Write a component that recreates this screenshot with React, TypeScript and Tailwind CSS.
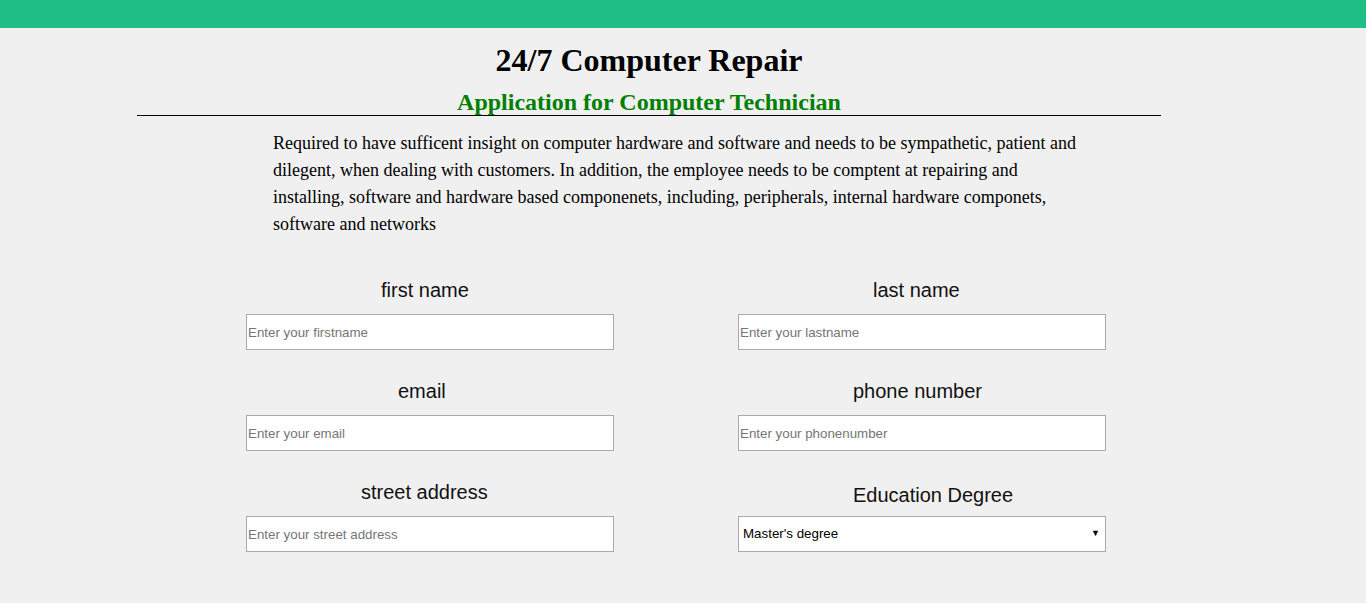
const FIELDS = [
    { label: "first name", placeholder: "Enter your firstname", pad: "pl-[135px]" },
    { label: "last name", placeholder: "Enter your lastname", pad: "pl-[135px]" },
    { label: "email", placeholder: "Enter your email", pad: "pl-[152px]" },
    { label: "phone number", placeholder: "Enter your phonenumber", pad: "pl-[115px]" },
    { label: "street address", placeholder: "Enter your street address", pad: "pl-[115px]" },
]

const SANS = { fontFamily: '"Liberation Sans", Arial, sans-serif' }

export default function App() {
    return (
        <div
            className="min-h-[603px] w-full bg-[#f0f0f0] text-black"
            style={{ fontFamily: '"Liberation Serif", "Times New Roman", serif' }}
        >
            {/* Top bar */}
            <div className="h-[28px] w-full bg-[#1ebe85]" />

            {/* Heading block */}
            <div className="ml-[137px] w-[1024px]">
                <h1 className="mt-[14px] text-center text-[32px] font-bold leading-[37px]">
                    24/7 Computer Repair
                </h1>
                <h2 className="mt-[10px] border-b border-black text-center text-[24px] font-bold leading-[26px] text-[#008000]">
                    Application for Computer Technician
                </h2>
            </div>

            <p className="ml-[273px] mt-[14px] w-[820px] text-[18px] leading-[27px]">
                Required to have sufficent insight on computer hardware and software and needs to be sympathetic, patient and
                dilegent, when dealing with customers. In addition, the employee needs to be comptent at repairing and
                installing, software and hardware based componenets, including, peripherals, internal hardware componets,
                software and networks
            </p>

            {/* Form */}
            <form className="ml-[246px] mt-[41px] grid w-[860px] grid-cols-[368px_368px] gap-x-[124px] gap-y-[30px]" style={SANS}>
                {FIELDS.map((f) => (
                    <div key={f.label} className="flex flex-col">
                        <label className={`${f.pad} text-[20px] leading-[23px] text-[#111]`}>{f.label}</label>
                        <input
                            type="text"
                            placeholder={f.placeholder}
                            className="mt-[12px] h-[36px] w-[368px] border border-[#a9a9a9] bg-white px-px text-[13.33px] outline-none placeholder:text-[#757575]"
                        />
                    </div>
                ))}
                <div className="flex flex-col">
                    <label className="mt-[3px] pl-[115px] text-[20px] leading-[23px] text-[#111]">Education Degree</label>
                    <div className="relative mt-[9px] h-[36px] w-[368px]">
                        <select
                            defaultValue="masters"
                            className="h-full w-full appearance-none border border-[#a9a9a9] bg-white pl-[4px] text-[13.33px] text-black outline-none"
                        >
                            <option value="highschool">High school diploma</option>
                            <option value="associate">Associate degree</option>
                            <option value="bachelors">Bachelor's degree</option>
                            <option value="masters">Master's degree</option>
                            <option value="doctorate">Doctorate</option>
                        </select>
                        <span className="pointer-events-none absolute right-[6px] top-[13px] text-[9px] leading-none">▼</span>
                    </div>
                </div>
            </form>
        </div>
    )
}
